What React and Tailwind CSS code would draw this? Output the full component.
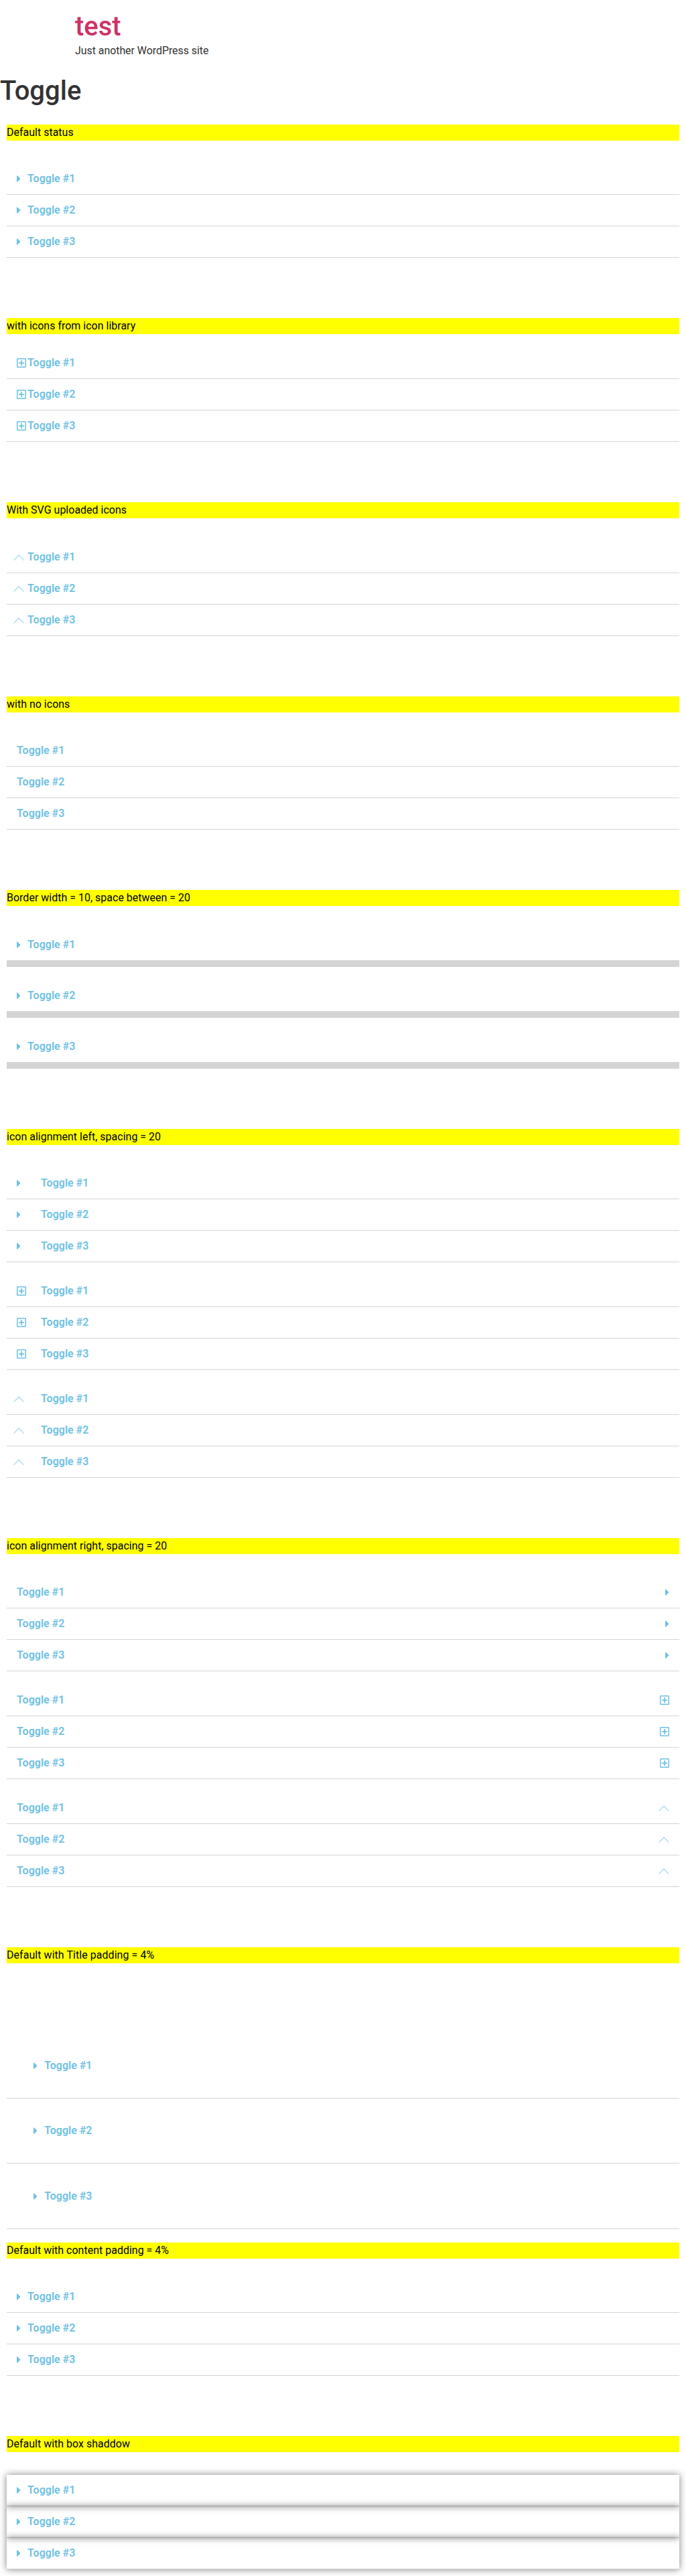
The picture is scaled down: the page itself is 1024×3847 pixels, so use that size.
import { FaCaretRight, FaRegPlusSquare } from "react-icons/fa";

function Chevron({ className = "" }) {
  return (
    <svg viewBox="0 0 16 16" className={`block h-4 w-4 ${className}`} fill="none" stroke="currentColor" strokeWidth="1">
      <path d="M0.7 12.7 L8 4.9 L15.3 12.7" />
    </svg>
  );
}

function Icon({ kind, right }) {
  if (kind === "caret") return <FaCaretRight className="block h-4 w-1.5" />;
  if (kind === "plus") return <FaRegPlusSquare className="block h-4 w-3.5" />;
  return <Chevron className={right ? "" : "-ml-[5px]"} />;
}

function Toggles({
  icon,
  right = false,
  spacing = "",
  row = "border-b border-[#d4d4d4] p-[15px]",
  className = "",
}) {
  return (
    <div className={className}>
      {[1, 2, 3].map((n) => (
        <div key={n} className={`flex items-center text-[16px] leading-4 font-semibold text-[#6ec1e4] ${row}`}>
          {icon && !right && (
            <span className={`flex h-4 w-4 shrink-0 ${spacing}`}>
              <Icon kind={icon} />
            </span>
          )}
          <span>Toggle #{n}</span>
          {icon && right && (
            <span className="ml-auto flex h-4 shrink-0 justify-end">
              <Icon kind={icon} right />
            </span>
          )}
        </div>
      ))}
    </div>
  );
}

function Section({ title, gap = "mt-[34.4px]", end = "mb-[90px]", tracking = "", children }) {
  return (
    <section className={end}>
      <h2 className={`h-6 bg-[#ffff00] text-[16px] leading-6 font-normal text-black ${tracking}`}>{title}</h2>
      <div className={`flex flex-col gap-5 ${gap}`}>{children}</div>
    </section>
  );
}

export default function App() {
  return (
    <div className="flow-root h-[3847px] w-full bg-white font-['Roboto',sans-serif] text-[#333333]">
      <header className="mx-auto w-[800px] pt-4">
        <div className="text-[40px] leading-[48px] font-medium text-[#cc3366]">test</div>
        <p className="text-[16px] leading-6 tracking-[-0.07px]">Just another WordPress site</p>
      </header>
      <h1 className="mt-6 text-[40px] leading-[48px] font-medium">Toggle</h1>
      <main className="mx-[10px] mt-[25.97px]">
        <Section title="Default status">
          <Toggles icon="caret" />
        </Section>
        <Section title="with icons from icon library" gap="mt-5">
          <Toggles icon="plus" />
        </Section>
        <Section title="With SVG uploaded icons">
          <Toggles icon="chevron" />
        </Section>
        <Section title="with no icons">
          <Toggles />
        </Section>
        <Section title="Border width = 10, space between = 20">
          <Toggles icon="caret" className="flex flex-col gap-5" row="border-b-[10px] border-[#d4d4d4] p-[15px]" />
        </Section>
        <Section title="icon alignment left, spacing = 20">
          <Toggles icon="caret" spacing="mr-5" />
          <Toggles icon="plus" spacing="mr-5" />
          <Toggles icon="chevron" spacing="mr-5" />
        </Section>
        <Section title="icon alignment right, spacing = 20">
          <Toggles icon="caret" right />
          <Toggles icon="plus" right />
          <Toggles icon="chevron" right />
        </Section>
        <Section title="Default with Title padding = 4%" gap="mt-[104.55px]" end="mb-[19.85px]" tracking="tracking-[0.05px]">
          <Toggles icon="caret" row="border-b border-[#d4d4d4] p-[4%]" />
        </Section>
        <Section title="Default with content padding = 4%">
          <Toggles icon="caret" />
        </Section>
        <Section title="Default with box shaddow" end="mb-0">
          <Toggles icon="caret" row="border-b border-[#d4d4d4] p-[15px] shadow-[0_0_10px_0_rgba(0,0,0,0.5)]" />
        </Section>
      </main>
    </div>
  );
}
